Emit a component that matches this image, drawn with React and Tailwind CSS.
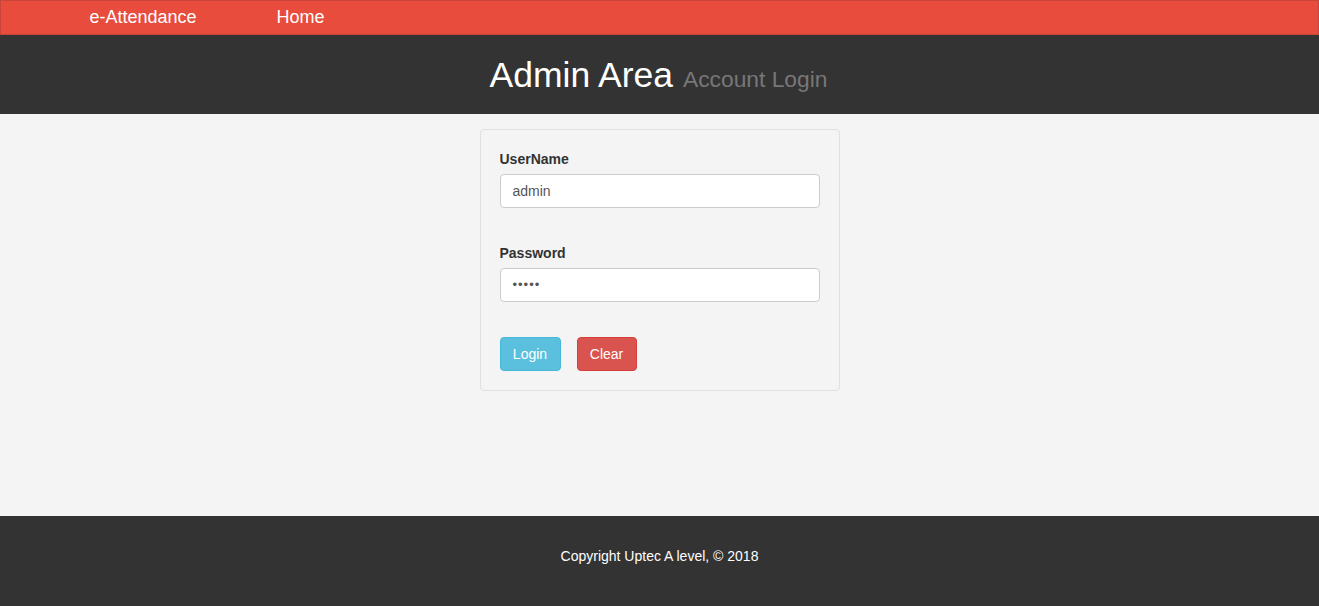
export default function App() {
  return (
    <div className="min-h-[606px] flex flex-col bg-[#f4f4f4] text-[14px] text-[#333]" style={{ fontFamily: '"Liberation Sans", Arial, sans-serif' }}>
      <nav className="h-[35px] bg-[#e74c3c] border border-[#c9453a] flex items-center">
        <div className="w-[1170px] mx-auto px-[15px] flex items-center mt-[-2px]">
          <span className="text-[18px] text-white leading-[20px]">e-Attendance</span>
          <span className="text-[18px] text-white leading-[20px] ml-[80px]">Home</span>
        </div>
      </nav>
      <header className="h-[79px] bg-[#333] flex items-center justify-center">
        <h1 className="text-[35.5px] leading-[40px] text-white mt-[4px] mr-[2px]">
          Admin Area <small className="text-[22.8px] text-[#777]">Account Login</small>
        </h1>
      </header>
      <main className="flex-1 flex justify-center pt-[15px]">
        <div className="w-[360px] h-[262px] bg-[#f4f4f4] border border-[#e0e0e0] rounded-[4px] p-[19px]">
          <label className="block font-bold leading-[20px] mb-[5px]">UserName</label>
          <div className="h-[34px] bg-white border border-[#ccc] rounded-[4px] px-[12px] flex items-center text-[#555]">admin</div>
          <label className="block font-bold leading-[20px] mt-[35px] mb-[5px]">Password</label>
          <div className="h-[34px] bg-white border border-[#ccc] rounded-[4px] px-[12px] flex items-center text-[#555] text-[13px] tracking-[1px]">•••••</div>
          <div className="flex gap-[16px] mt-[35px]">
            <button className="h-[34px] w-[61px] bg-[#5bc0de] border border-[#46b8da] rounded-[4px] text-white">Login</button>
            <button className="h-[34px] w-[60px] bg-[#d9534f] border border-[#d43f3a] rounded-[4px] text-white">Clear</button>
          </div>
        </div>
      </main>
      <footer className="h-[90px] bg-[#333] flex items-center justify-center text-white">
        <span className="mt-[-10px]">Copyright Uptec A level, © 2018</span>
      </footer>
    </div>
  );
}
